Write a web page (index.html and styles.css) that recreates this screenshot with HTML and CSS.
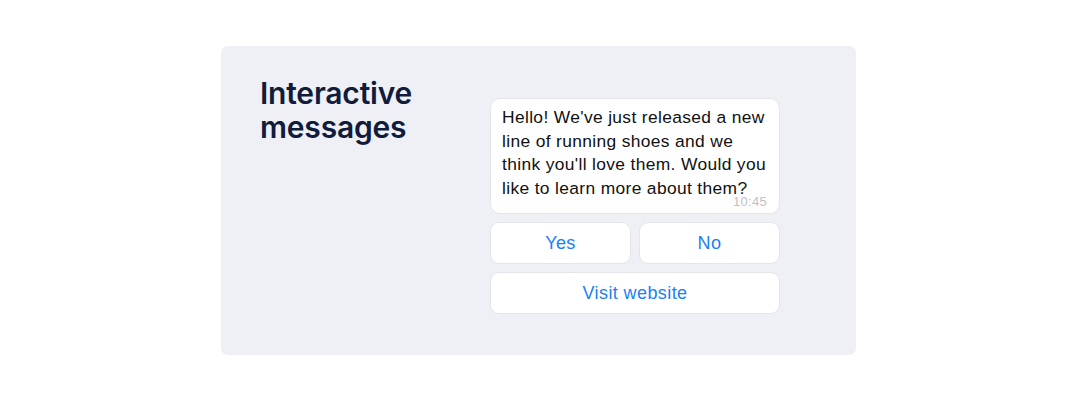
FILE: index.html
```html
<!DOCTYPE html>
<html>
<head>
<meta charset="utf-8">
<link rel="stylesheet" href="styles.css">
</head>
<body>
<div class="page">
  <div class="card">
    <h1 class="title">Interactive<br>messages</h1>
    <div class="chat">
      <div class="bubble">
        <p class="msg">Hello! We've just released a new<br>line of running shoes and we<br>think you'll love them. Would you<br>like to learn more about them?</p>
        <div class="time">10:45</div>
      </div>
      <div class="buttons">
        <div class="btn">Yes</div>
        <div class="btn">No</div>
        <div class="btn wide">Visit website</div>
      </div>
    </div>
  </div>
</div>
</body>
</html>
```
FILE: styles.css
```css
html, body {
  margin: 0;
  padding: 0;
  background: #ffffff;
}
.page {
  width: 1076px;
  height: 403px;
  padding-top: 46px;
  box-sizing: border-box;
}
.card {
  margin-left: 221px;
  width: 635px;
  height: 309px;
  background: #eff0f5;
  border-radius: 7px;
  display: flex;
  box-sizing: border-box;
  padding: 30px 0 0 39px;
}
.title {
  margin: 0;
  width: 230px;
  font-family: Inter, "Liberation Sans", sans-serif;
  font-weight: 600;
  font-size: 30px;
  line-height: 34px;
  letter-spacing: -0.2px;
  color: #111c3d;
}
.chat {
  margin-top: 22px;
  width: 290px;
  display: flex;
  flex-direction: column;
  gap: 8px;
}
.bubble {
  background: #ffffff;
  border-radius: 10px;
  border: 1px solid #e3e5eb;
  padding: 7px 8px 0 11px;
  height: 116px;
  box-sizing: border-box;
  font-family: "Liberation Sans", Arial, sans-serif;
}
.msg {
  margin: 0;
  font-size: 17.4px;
  line-height: 23.5px;
  letter-spacing: 0.35px;
  white-space: nowrap;
  color: #111111;
}
.time {
  text-align: right;
  font-size: 13px;
  line-height: 14px;
  color: #bfbfc4;
  margin-top: -5px;
  padding-right: 4px;
  letter-spacing: 0.3px;
}
.buttons {
  display: grid;
  grid-template-columns: 1fr 1fr;
  gap: 8px 8px;
}
.btn {
  background: #ffffff;
  border-radius: 9px;
  border: 1px solid #e3e5eb;
  box-sizing: border-box;
  height: 42px;
  padding-top: 1px;
  display: flex;
  align-items: center;
  justify-content: center;
  font-family: "Liberation Sans", Arial, sans-serif;
  font-size: 18px;
  letter-spacing: 0.4px;
  color: #1a80f6;
}
.btn.wide {
  grid-column: 1 / span 2;
}
```
